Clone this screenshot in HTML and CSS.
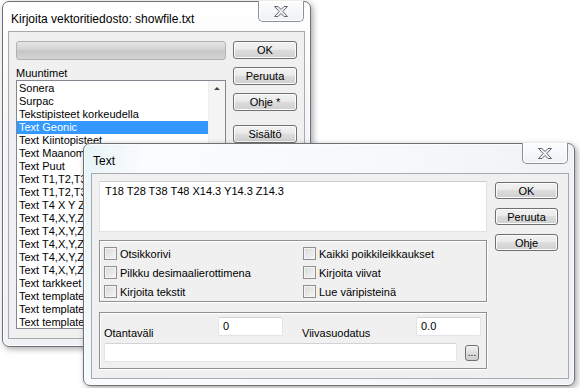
FILE: index.html
```html
<!DOCTYPE html>
<html lang="fi">
<head>
  <meta charset="UTF-8" />
  <title>Kirjoita vektoritiedosto</title>
  <link rel="stylesheet" href="styles.css">
</head>
<body>
  <div class="desk">

    <!-- Takaikkuna -->
    <div class="win win-back">
      <div class="titlebar">
        <span class="title">Kirjoita vektoritiedosto: showfile.txt</span>
        <span class="close">
          <svg width="16" height="13" viewBox="0 0 16 13">
            <path d="M1.5 1.5h3.5l3 3 3-3h3.5l-4.7 5 4.7 5H11l-3-3-3 3H1.5l4.7-5z" fill="#eef0f3" stroke="#5f6670" stroke-width="1"/>
          </svg>
        </span>
      </div>
      <div class="client back-client">
        <div class="col-left">
          <div class="progress"></div>
          <div class="label">Muuntimet</div>
          <div class="list">
            <ul>
              <li>Sonera</li>
              <li>Surpac</li>
              <li>Tekstipisteet korkeudella</li>
              <li class="sel">Text Geonic</li>
              <li>Text Kiintopisteet</li>
              <li>Text Maanomistajat</li>
              <li>Text Puut</li>
              <li>Text T1,T2,T3</li>
              <li>Text T1,T2,T3</li>
              <li>Text T4 X Y Z</li>
              <li>Text T4,X,Y,Z</li>
              <li>Text T4,X,Y,Z</li>
              <li>Text T4,X,Y,Z</li>
              <li>Text T4,X,Y,Z</li>
              <li>Text T4,X,Y,Z</li>
              <li>Text tarkkeet</li>
              <li>Text template</li>
              <li>Text template</li>
              <li>Text template</li>
            </ul>
            <div class="scroll"><span class="arrow"></span></div>
          </div>
        </div>
        <div class="btn-col">
          <button class="btn">OK</button>
          <button class="btn">Peruuta</button>
          <button class="btn">Ohje *</button>
          <button class="btn btn-gap">Sisältö</button>
        </div>
      </div>
    </div>

    <!-- Etuikkuna -->
    <div class="win win-front">
      <div class="titlebar">
        <span class="title">Text</span>
        <span class="close">
          <svg width="16" height="13" viewBox="0 0 16 13">
            <path d="M1.5 1.5h3.5l3 3 3-3h3.5l-4.7 5 4.7 5H11l-3-3-3 3H1.5l4.7-5z" fill="#eef0f3" stroke="#5f6670" stroke-width="1"/>
          </svg>
        </span>
      </div>
      <div class="client front-client">
        <div class="col-left">
          <div class="textbox">T18 T28 T38 T48 X14.3 Y14.3 Z14.3</div>

          <div class="group checks">
            <label class="chk"><span class="box"></span>Otsikkorivi</label>
            <label class="chk"><span class="box"></span>Kaikki poikkileikkaukset</label>
            <label class="chk"><span class="box"></span>Pilkku desimaalierottimena</label>
            <label class="chk"><span class="box"></span>Kirjoita viivat</label>
            <label class="chk"><span class="box"></span>Kirjoita tekstit</label>
            <label class="chk"><span class="box"></span>Lue väripisteinä</label>
          </div>

          <div class="group fields">
            <div class="row">
              <span class="flabel">Otantaväli</span>
              <span class="input small">0</span>
              <span class="flabel second">Viivasuodatus</span>
              <span class="input small">0.0</span>
            </div>
            <div class="row">
              <span class="input long"></span>
              <button class="dots">...</button>
            </div>
          </div>
        </div>
        <div class="btn-col">
          <button class="btn">OK</button>
          <button class="btn">Peruuta</button>
          <button class="btn">Ohje</button>
        </div>
      </div>
    </div>

  </div>
</body>
</html>
```

FILE: styles.css
```css
* {
  box-sizing: border-box;
}
body {
  margin: 0;
  background: #fff;
  font-family: "Liberation Sans", Arial, sans-serif;
  font-size: 11px;
  color: #000;
}
.desk {
  position: relative;
  width: 580px;
  height: 388px;
  overflow: hidden;
}

/* Ikkunan kehys */
.win {
  position: absolute;
  display: flex;
  flex-direction: column;
  border: 1px solid #6e7278;
  border-radius: 7px;
  background: linear-gradient(#ffffff, #f3f5f8 40%, #eef1f5);
  box-shadow: 2px 2px 6px rgba(0, 0, 0, 0.35), inset 0 0 0 1px #fdfdfd;
}
.win-back {
  left: 2px;
  top: 1px;
  width: 309px;
  height: 346px;
}
.win-front {
  left: 83px;
  top: 143px;
  width: 492px;
  height: 243px;
  background: linear-gradient(100deg, #e6f4f8, #fbfcfd 12%, #f6f8fa 60%, #eef1f5);
}
.titlebar {
  height: 29px;
  display: flex;
  justify-content: space-between;
  align-items: flex-start;
  padding-left: 8px;
}
.title {
  font-size: 12px;
  line-height: 14px;
  margin-top: 10px;
}
.win-front .title {
  margin-left: 1px;
}
.close {
  width: 46px;
  height: 21px;
  margin-top: -1px;
  margin-right: 6px;
  border: 1px solid #8a9099;
  border-top: none;
  border-radius: 0 0 5px 5px;
  background: linear-gradient(#fdfdfd, #eff1f4);
  display: flex;
  align-items: center;
  justify-content: center;
  box-shadow: inset 0 0 0 1px #fff;
}

.client {
  margin: 0 5px;
  border: 1px solid #a7abb0;
  background: #f0f0f0;
  display: flex;
  gap: 7px;
}
.back-client {
  height: 308px;
  padding: 9px 7px;
}
.front-client {
  height: 206px;
  padding: 7px;
  margin-left: 7px;
  gap: 8px;
}

.col-left {
  display: flex;
  flex-direction: column;
}
.back-client .col-left {
  width: 210px;
}
.front-client .col-left {
  width: 388px;
}

/* Edistymispalkki */
.progress {
  height: 19px;
  border: 1px solid #b2b2b2;
  border-radius: 3px;
  background: linear-gradient(#e6e6e6, #d2d2d2 45%, #c6c6c6 55%, #d4d4d4);
}
.label {
  margin-top: 6px;
  line-height: 14px;
}

/* Lista */
.list {
  height: 249px;
  border: 1px solid #828790;
  background: #fff;
  display: flex;
}
.list ul {
  flex: 1;
  margin: 0;
  padding: 0;
  list-style: none;
  white-space: nowrap;
  overflow: hidden;
}
.list li {
  height: 13px;
  line-height: 13px;
  padding-left: 2px;
}
.list li:first-child {
  margin-top: 1px;
}
.list li.sel {
  background: #3399ff;
  color: #fff;
}
.scroll {
  width: 17px;
  background: #f4f4f4;
  border-left: 1px solid #ededed;
  display: flex;
  justify-content: center;
}
.arrow {
  margin-top: 6px;
  width: 0;
  height: 0;
  border-left: 3px solid transparent;
  border-right: 3px solid transparent;
  border-bottom: 3px solid #444;
}

/* Painikkeet */
.btn-col {
  display: flex;
  flex-direction: column;
  gap: 8px;
}
.back-client .btn-col {
  width: 64px;
}
.front-client .btn-col {
  width: 63px;
  padding-top: 1px;
  gap: 9px;
}
.btn {
  height: 18px;
  padding: 0;
  font: inherit;
  color: #000;
  border: 1px solid #707070;
  border-radius: 3px;
  background: linear-gradient(#f2f2f2, #ebebeb 45%, #dddddd 50%, #cfcfcf);
  box-shadow: inset 0 0 0 1px #fcfcfc;
}
.front-client .btn {
  height: 17px;
}
.btn-gap {
  margin-top: 6px;
}

/* Tekstikenttä */
.textbox {
  height: 51px;
  border: 1px solid #dfe2e6;
  border-top-color: #c9ccd1;
  background: #fff;
  padding: 3px 5px;
  line-height: 13px;
}

/* Ryhmät */
.group {
  border: 1px solid #8f9193;
  box-shadow: inset 1px 1px 0 #fff, 1px 1px 0 #fff;
}
.checks {
  margin-top: 8px;
  height: 62px;
  padding: 3px 4px 0;
  display: grid;
  grid-template-columns: 199px 1fr;
  grid-auto-rows: 19px;
}
.chk {
  display: flex;
  align-items: center;
}
.box {
  width: 13px;
  height: 13px;
  margin-right: 3px;
  border: 1px solid #8f8f8f;
  background: linear-gradient(135deg, #d8d8d8, #f6f6f6);
  box-shadow: inset 0 0 0 1px #f4f4f4;
}
.fields {
  margin-top: 10px;
  height: 57px;
  padding: 4px 4px 0;
  display: flex;
  flex-direction: column;
  gap: 7px;
}
.row {
  display: flex;
  align-items: flex-end;
}
.flabel {
  width: 114px;
  line-height: 14px;
  margin-bottom: -4px;
}
.flabel.second {
  margin-left: 19px;
}
.input {
  height: 19px;
  background: #fff;
  border: 1px solid #e2e4e8;
  border-top-color: #d0d3d8;
  border-radius: 2px;
  padding: 2px 4px;
  line-height: 13px;
}
.input.small {
  width: 65px;
}
.input.long {
  width: 353px;
}
.dots {
  width: 14px;
  height: 16px;
  margin: 0 0 1px 8px;
  padding: 0;
  font: inherit;
  font-size: 10px;
  line-height: 10px;
  border: 1px solid #707070;
  border-radius: 3px;
  background: linear-gradient(#f2f2f2, #dddddd 50%, #cfcfcf);
}
```
